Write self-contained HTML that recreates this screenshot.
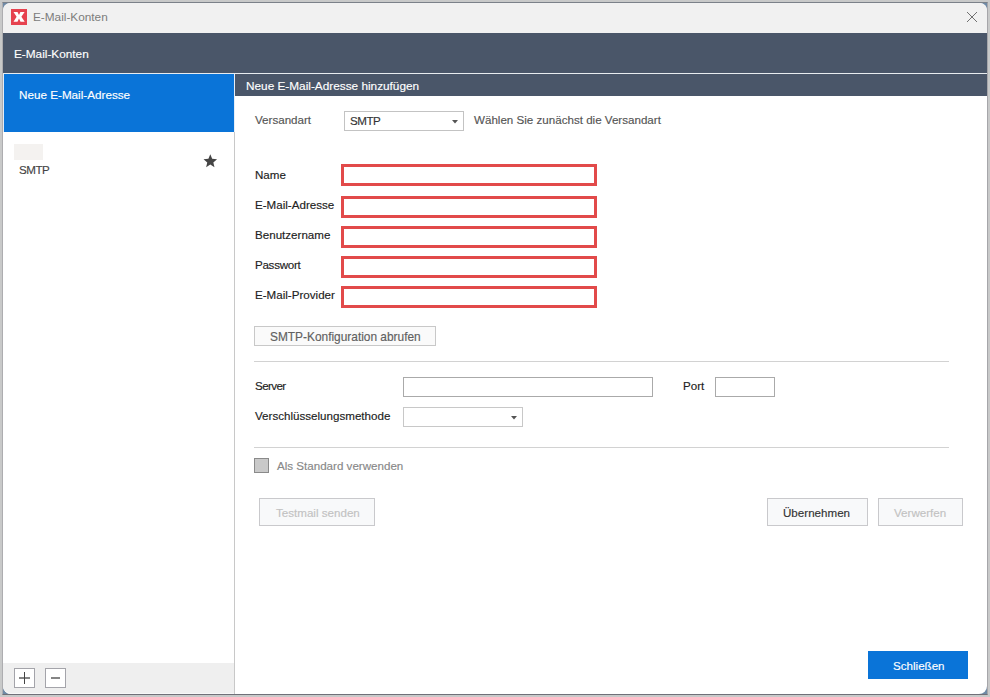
<!DOCTYPE html>
<html><head><meta charset="utf-8">
<style>
*{margin:0;padding:0;box-sizing:border-box}
html,body{width:990px;height:697px;overflow:hidden;background:#c8c9c9;font-family:"Liberation Sans",sans-serif;}
.a{position:absolute}
.t{position:absolute;white-space:nowrap;font-size:12px;line-height:14px;height:14px}
#win{position:absolute;left:2px;top:2px;width:986px;height:693px;background:#6f8aa6;border-top:1px solid #7b8189;border-left:1px solid #adadb0;border-right:1px solid #a6a6aa;border-bottom:1px solid #707078}
#inner{position:absolute;left:3px;top:3px;width:984px;height:691px;background:#fff;border-radius:8px;overflow:hidden}
.t{-webkit-text-stroke:0.15px currentColor}
</style></head><body>
<div id="win"></div>
<div id="inner"></div>
<!-- title bar -->
<div class="a" style="left:3px;top:3px;width:984px;height:30px;background:#f1f1f1;border-radius:7px 7px 0 0"></div>
<div class="a" style="left:11px;top:9px;width:16px;height:16px;background:#e6424f"></div>
<svg class="a" style="left:11px;top:9px" width="16" height="16" viewBox="0 0 16 16"><polygon points="2.5,2.9 6.5,2.9 8.0,6.1 9.4,2.9 13.6,2.9 10.4,7.8 13.7,12.8 9.5,12.8 8.0,9.5 6.5,12.8 2.5,12.8 5.6,7.8" fill="#fff"/></svg>
<div class="t" style="left:33px;top:10px;color:#7c7c7c;font-size:11.8px;-webkit-text-stroke:0">E-Mail-Konten</div>
<svg class="a" style="left:966px;top:11px" width="12" height="12" viewBox="0 0 12 12"><path d="M1 1L11 11M11 1L1 11" stroke="#707070" stroke-width="1"/></svg>
<!-- header -->
<div class="a" style="left:3px;top:33px;width:984px;height:40px;background:#4a5669"></div>
<div class="t" style="left:14px;top:47px;color:#fff;font-size:11.8px">E-Mail-Konten</div>
<div class="a" style="left:3px;top:73px;width:984px;height:1px;background:#e8ecf0"></div>
<!-- left panel -->
<div class="a" style="left:3px;top:74px;width:1px;height:58px;background:#e4ecf6"></div>
<div class="a" style="left:4px;top:74px;width:230px;height:58px;background:#0a74d8"></div>
<div class="t" style="left:19px;top:88px;color:#fff;font-size:11.7px">Neue E-Mail-Adresse</div>
<div class="a" style="left:14px;top:144px;width:29px;height:16px;background:#f4f2f0"></div>
<div class="t" style="left:19px;top:163px;color:#444;font-size:11.6px;letter-spacing:-0.5px">SMTP</div>
<svg class="a" style="left:203px;top:153.9px" width="15" height="14" viewBox="0 0 15 14"><polygon points="7.30,0.30 9.18,4.81 14.05,5.21 10.34,8.39 11.47,13.14 7.30,10.60 3.13,13.14 4.26,8.39 0.55,5.21 5.42,4.81" fill="#454545"/></svg>
<div class="a" style="left:234px;top:74px;width:1px;height:58px;background:#e6eef8"></div>
<div class="a" style="left:234px;top:132px;width:1px;height:562px;background:#c8c8c8"></div>
<div class="a" style="left:3px;top:663px;width:231px;height:31px;background:#efefef;border-bottom:1px solid #f8f8f8;border-radius:0 0 0 8px"></div>
<div class="a" style="left:14px;top:668px;width:21px;height:20px;border:1px solid #a4a4aa;background:#fff"></div>
<div class="a" style="left:19px;top:677px;width:11px;height:2px;background:#858585"></div>
<div class="a" style="left:24px;top:672px;width:1.4px;height:12px;background:#444"></div>
<div class="a" style="left:45px;top:668px;width:21px;height:20px;border:1px solid #a4a4aa;background:#fff"></div>
<div class="a" style="left:51px;top:677px;width:9px;height:2px;background:#858585"></div>
<!-- right panel header -->
<div class="a" style="left:235px;top:74px;width:752px;height:22px;background:#4a5669"></div>
<div class="t" style="left:246px;top:79px;color:#fff;font-size:11.8px">Neue E-Mail-Adresse hinzufügen</div>
<!-- form -->
<div class="t" style="left:255px;top:113px;color:#555;font-size:11.6px">Versandart</div>
<div class="a" style="left:344px;top:111px;width:120px;height:20px;border:1px solid #c3c3c3"></div>
<div class="t" style="left:350px;top:114px;color:#333;font-size:11.6px;letter-spacing:-0.5px">SMTP</div>
<svg class="a" style="left:452px;top:120px" width="6" height="4" viewBox="0 0 6 4"><path d="M0 0H6L3 3.5Z" fill="#555"/></svg>
<div class="t" style="left:474px;top:113px;color:#555;font-size:11.6px">Wählen Sie zunächst die Versandart</div>

<div class="t" style="left:255px;top:168px;color:#222;font-size:11.6px">Name</div>
<div class="a" style="left:341px;top:164px;width:256px;height:22px;border:3px solid #e24a4a"></div>
<div class="t" style="left:255px;top:198px;color:#222;font-size:11.6px">E-Mail-Adresse</div>
<div class="a" style="left:341px;top:196px;width:256px;height:22px;border:3px solid #e24a4a"></div>
<div class="t" style="left:255px;top:228px;color:#222;font-size:11.6px">Benutzername</div>
<div class="a" style="left:341px;top:226px;width:256px;height:22px;border:3px solid #e24a4a"></div>
<div class="t" style="left:255px;top:258px;color:#222;font-size:11.6px;letter-spacing:-0.28px">Passwort</div>
<div class="a" style="left:341px;top:256px;width:256px;height:22px;border:3px solid #e24a4a"></div>
<div class="t" style="left:255px;top:288px;color:#222;font-size:11.6px">E-Mail-Provider</div>
<div class="a" style="left:341px;top:286px;width:256px;height:22px;border:3px solid #e24a4a"></div>

<div class="a" style="left:254px;top:326px;width:182px;height:20px;border:1px solid #c8c8c8;background:#fafafa"></div>
<div class="t" style="left:270px;top:330px;color:#606060;font-size:11.9px">SMTP-Konfiguration abrufen</div>
<div class="a" style="left:254px;top:361px;width:695px;height:1px;background:#d2d2d2"></div>

<div class="t" style="left:255px;top:379px;color:#222;font-size:11.6px;letter-spacing:-0.6px">Server</div>
<div class="a" style="left:403px;top:377px;width:250px;height:20px;border:1px solid #aaa"></div>
<div class="t" style="left:683px;top:379px;color:#222;font-size:11.6px">Port</div>
<div class="a" style="left:715px;top:377px;width:60px;height:20px;border:1px solid #aaa"></div>
<div class="t" style="left:255px;top:409px;color:#222;font-size:11.6px">Verschlüsselungsmethode</div>
<div class="a" style="left:403px;top:407px;width:120px;height:20px;border:1px solid #c8c8c8"></div>
<svg class="a" style="left:511px;top:416px" width="6" height="4" viewBox="0 0 6 4"><path d="M0 0H6L3 3.5Z" fill="#555"/></svg>
<div class="a" style="left:254px;top:447px;width:695px;height:1px;background:#d2d2d2"></div>

<div class="a" style="left:254px;top:458px;width:15px;height:15px;border:1px solid #8a8a8a;background:#c9c9c9"></div>
<div class="t" style="left:277px;top:459px;color:#888;font-size:11.6px">Als Standard verwenden</div>

<div class="a" style="left:259px;top:498px;width:116px;height:28px;border:1px solid #c9c9cc;background:#f8f9fa"></div>
<div class="t" style="left:276px;top:506px;color:#c2c2c2;font-size:11.6px">Testmail senden</div>
<div class="a" style="left:767px;top:498px;width:101px;height:28px;border:1px solid #c9c9cc;background:#f8f9fa"></div>
<div class="t" style="left:783px;top:506px;color:#333;font-size:11.6px">Übernehmen</div>
<div class="a" style="left:878px;top:498px;width:85px;height:28px;border:1px solid #c9c9cc;background:#f8f9fa"></div>
<div class="t" style="left:894px;top:506px;color:#c2c2c2;font-size:11.6px">Verwerfen</div>

<div class="a" style="left:868px;top:651px;width:100px;height:28px;background:#0a74d8"></div>
<div class="t" style="left:893px;top:659px;color:#fff;font-size:11.6px">Schließen</div>
</body></html>
